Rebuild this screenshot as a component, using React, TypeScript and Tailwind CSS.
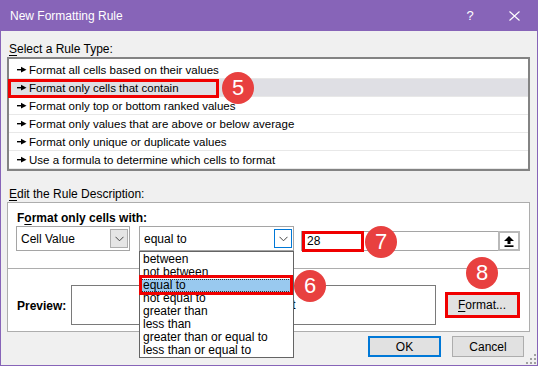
import React from 'react';

const rules = [
  'Format all cells based on their values',
  'Format only cells that contain',
  'Format only top or bottom ranked values',
  'Format only values that are above or below average',
  'Format only unique or duplicate values',
  'Use a formula to determine which cells to format',
];

const operators = [
  'between',
  'not between',
  'equal to',
  'not equal to',
  'greater than',
  'less than',
  'greater than or equal to',
  'less than or equal to',
];

function RuleArrow() {
  return (
    <svg width="10" height="7" viewBox="0 0 10 7" className="shrink-0">
      <rect x="0" y="3" width="5" height="1.4" fill="#000" />
      <polygon points="4,0.8 9.5,3.7 4,6.4" fill="#000" />
    </svg>
  );
}

function Chevron() {
  return (
    <svg width="9" height="6" viewBox="0 0 9 6">
      <polyline points="0.5,0.8 4.5,4.8 8.5,0.8" fill="none" stroke="#444" strokeWidth="1" />
    </svg>
  );
}

function Badge({ n, className }: { n: number; className: string }) {
  return (
    <div
      className={
        'absolute w-[32px] h-[32px] rounded-full bg-[#e8403f] text-white text-[22px] leading-none flex items-center justify-center ' +
        className
      }
    >
      {n}
    </div>
  );
}

export default function App() {
  return (
    <div className="relative w-[538px] h-[366px] bg-[#8764b8] flex flex-col overflow-hidden font-['Liberation_Sans',Arial,sans-serif] text-[12px] text-black">
      {/* Title bar */}
      <div className="h-[31px] shrink-0 flex items-center pl-[10px] pr-[14px] text-white">
        <span>New Formatting Rule</span>
        <div className="ml-auto flex items-center gap-[24px]">
          <span className="w-[20px] text-center text-[13px]">?</span>
          <div className="w-[20px] flex justify-center">
            <svg width="11" height="10" viewBox="0 0 11 10">
              <path d="M0.5 0.5 L10.5 9.5 M10.5 0.5 L0.5 9.5" stroke="#fff" strokeWidth="1.1" />
            </svg>
          </div>
        </div>
      </div>

      {/* Body */}
      <div className="relative flex-1 mx-[1px] mb-[1px] bg-[#f0f0f0] pl-[6px] pr-[7px] flex flex-col leading-[14px]">
        <div className="mt-[11px] pl-[2px]">
          <span className="underline underline-offset-2">S</span>elect a Rule Type:
        </div>

        {/* Rule list */}
        <div className="mt-[1px] h-[114px] border-2 border-[#838383] bg-white pt-[2px] flex flex-col text-[11.5px]">
          {rules.map((r, i) => (
            <div
              key={r}
              className={
                'relative h-[18px] shrink-0 border-b border-[#e8e8e8] flex items-center pl-[8px] gap-[2px] ' +
                (i === 1 ? 'bg-[#dfdfe4]' : '')
              }
            >
              <RuleArrow />
              <span>{r}</span>
              {i === 1 && (
                <div className="absolute left-[-1px] top-[0px] w-[211px] h-[19px] border-[3px] border-[#f00000]" />
              )}
            </div>
          ))}
        </div>

        <div className="mt-[16px] pl-[2px]">
          <span className="underline underline-offset-2">E</span>dit the Rule Description:
        </div>

        {/* Description group */}
        <div className="mt-[1px] h-[130px] border border-[#adadad] bg-white flex flex-col">
          <div className="h-[66px] shrink-0 border-b border-[#adadad] pt-[8px] pl-[8px] flex flex-col">
            <div className="pl-[1px] font-bold">
              F<span className="underline underline-offset-2">o</span>rmat only cells with:
            </div>
            <div className="mt-[1px] flex items-end">
              <div className="w-[114px] h-[25px] border border-[#a5a5a5] bg-white flex items-center pl-[4px] pr-[1px]">
                <span>Cell Value</span>
                <div className="ml-auto w-[18px] h-[19px] bg-[#e5e5e5] border border-[#adadad] flex items-center justify-center">
                  <Chevron />
                </div>
              </div>
              <div className="ml-[9px] w-[155px] h-[25px] border border-[#a5a5a5] bg-white flex items-center pl-[4px] pr-[1px]">
                <span>equal to</span>
                <div className="ml-auto w-[18px] h-[19px] bg-white border border-[#0078d7] flex items-center justify-center">
                  <Chevron />
                </div>
              </div>
              <div className="relative ml-[7px] w-[219px] h-[20px] border border-[#a5a5a5] bg-white flex items-center pl-[5px]">
                <span>28</span>
                <div className="ml-auto w-[22px] h-[20px] -mr-[1px] border-2 border-[#b9b9b9] bg-white flex items-center justify-center">
                  <svg width="10" height="11" viewBox="0 0 10 11">
                    <polygon points="5,0 10,5 6.5,5 6.5,8 3.5,8 3.5,5 0,5" fill="#000" />
                    <rect x="0.5" y="9.3" width="9" height="1.7" fill="#000" />
                  </svg>
                </div>
                <div className="absolute left-[0px] top-[-1px] w-[62px] h-[21px] border-[3px] border-[#f00000]" />
              </div>
            </div>
          </div>

          <div className="flex-1 pt-[16px] pl-[9px] flex items-start">
            <div className="w-[54px] h-[40px] pt-[1px] flex items-center font-bold">Preview:</div>
            <div className="w-[365px] h-[40px] border border-[#7a7a7a] bg-white pl-[6px] flex items-center justify-center">
              No Format Set
            </div>
            <div className="relative ml-[10px] mt-[8px] w-[72px] h-[23px] bg-[#e1e1e1] border border-[#adadad] flex items-center justify-center">
              <span>
                <span className="underline underline-offset-2">F</span>ormat...
              </span>
              <div className="absolute left-[-2px] top-[-2px] w-[75px] h-[26px] border-[3px] border-[#f00000]" />
            </div>
          </div>
        </div>

        {/* Dialog buttons */}
        <div className="mt-[4px] flex justify-end gap-[11px] mr-[6px]">
          <div className="w-[73px] h-[21px] bg-[#e1e1e1] border-2 border-[#0078d7] flex items-center justify-center">OK</div>
          <div className="w-[72px] h-[21px] bg-[#e1e1e1] border border-[#adadad] flex items-center justify-center">Cancel</div>
        </div>

        {/* Resize grip */}
        <svg width="10" height="10" viewBox="0 0 10 10" className="absolute right-[1px] bottom-[1px]">
          <g fill="#a0a0a0">
            <rect x="8" y="0" width="2" height="2" />
            <rect x="4" y="4" width="2" height="2" />
            <rect x="8" y="4" width="2" height="2" />
            <rect x="0" y="8" width="2" height="2" />
            <rect x="4" y="8" width="2" height="2" />
            <rect x="8" y="8" width="2" height="2" />
          </g>
        </svg>
      </div>

      {/* Open operator dropdown */}
      <div className="absolute left-[139px] top-[251px] w-[155px] h-[107px] border border-[#646464] bg-white pt-[1px] flex flex-col leading-[13px]">
        {operators.map((o, i) => (
          <div
            key={o}
            className={
              'h-[13px] shrink-0 pl-[3px] ' +
              (i === 2 ? 'bg-[#99c9ef] outline-1 outline-dotted outline-[#333] -outline-offset-1' : '')
            }
          >
            {o}
          </div>
        ))}
      </div>
      <div className="absolute left-[139px] top-[275px] w-[154px] h-[20px] border-[3px] border-[#f00000]" />

      <Badge n={5} className="left-[222px] top-[72px]" />
      <Badge n={7} className="left-[365px] top-[226px]" />
      <Badge n={6} className="left-[294px] top-[270px]" />
      <Badge n={8} className="left-[466px] top-[257px]" />
    </div>
  );
}
